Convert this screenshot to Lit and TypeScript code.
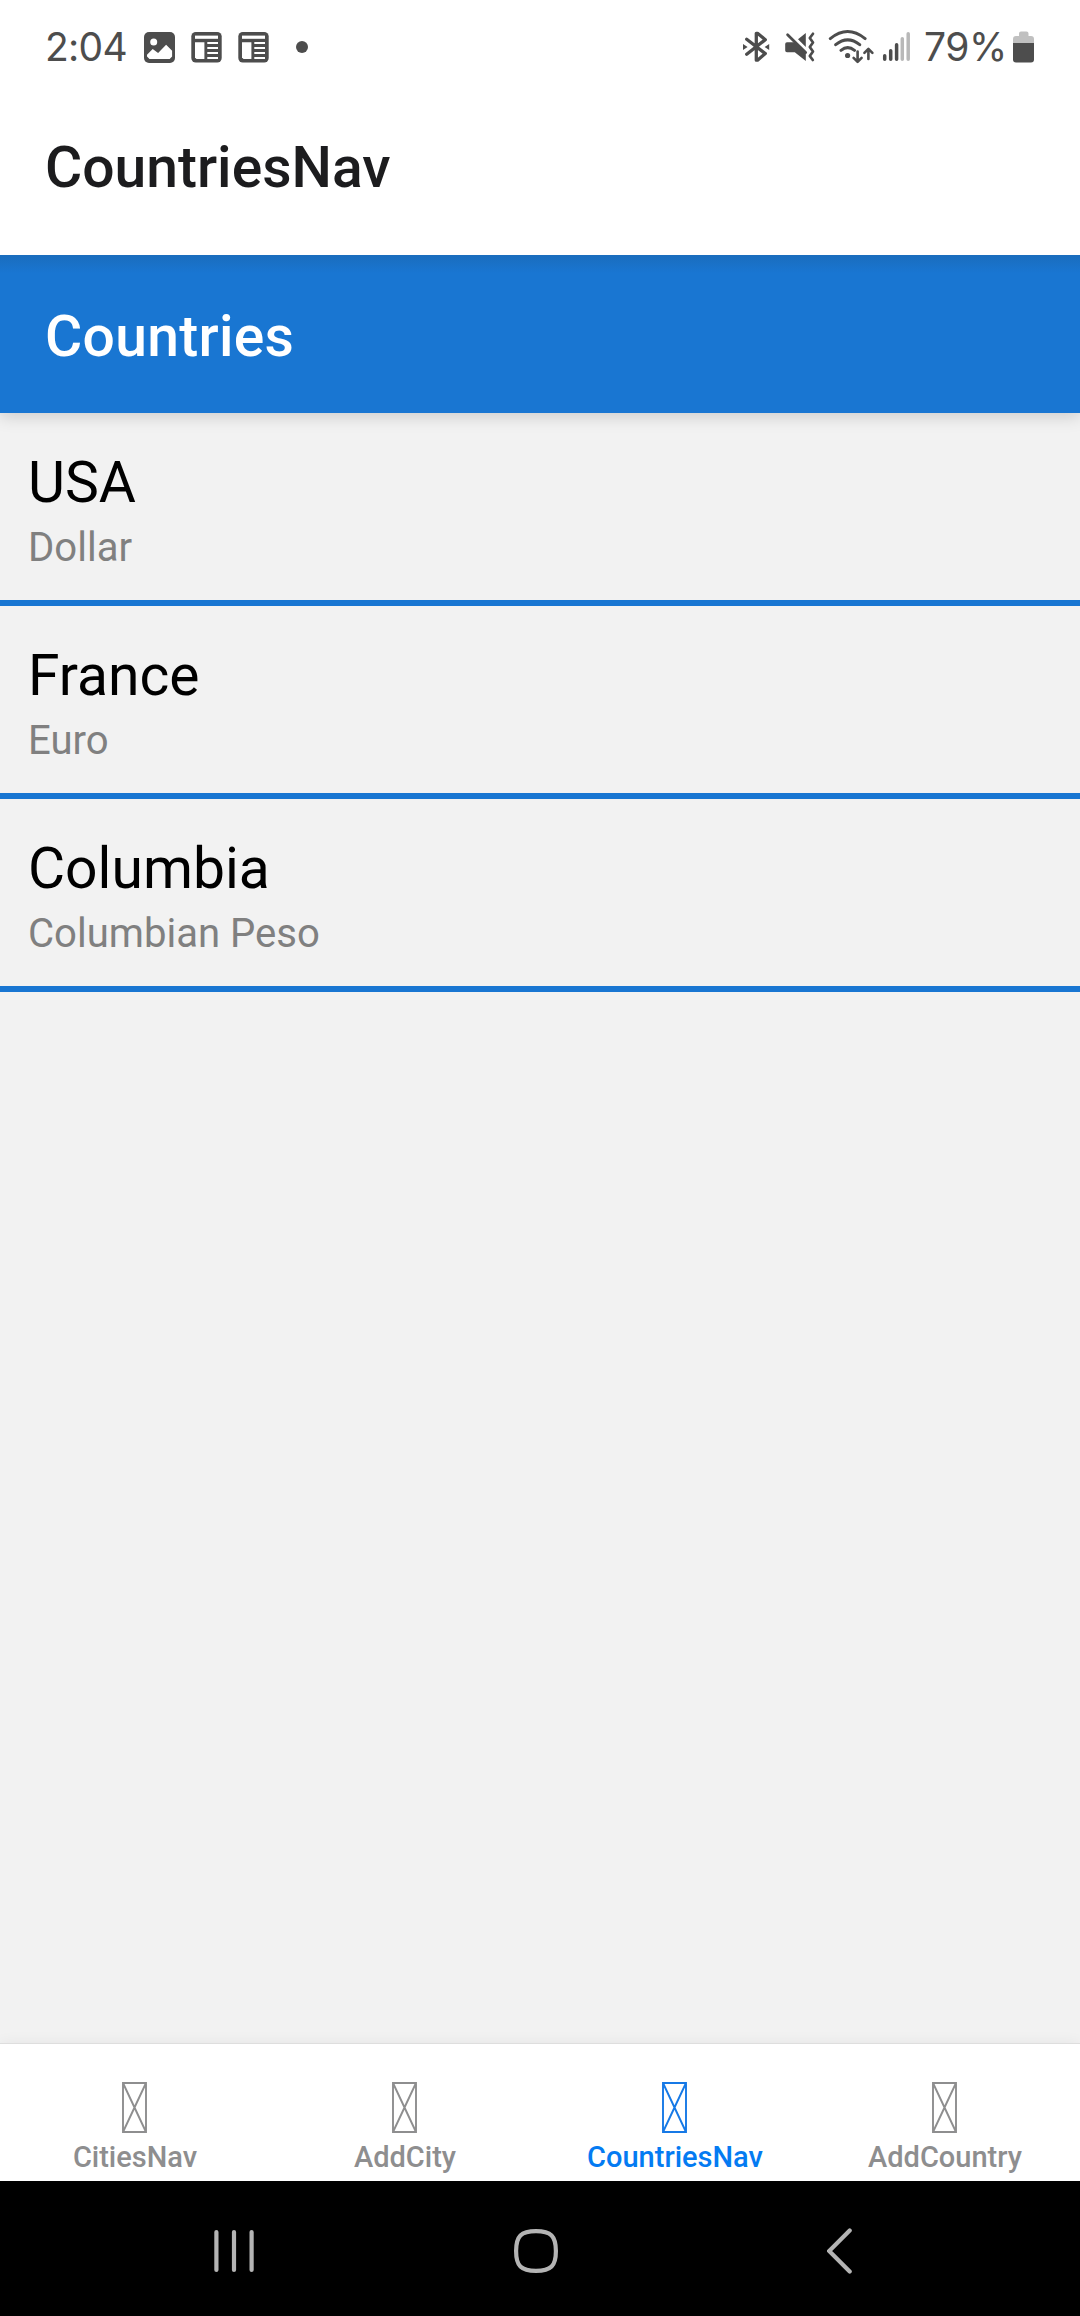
import { LitElement, html, css, svg } from "lit";
import { customElement, property } from "lit/decorators.js";
import { classMap } from "lit/directives/class-map.js";

const newsIcon = (dx: number) => svg`
  <g transform="translate(${dx} 0)">
    <rect x="191.3" y="32" width="30.4" height="30.6" rx="4.5" fill="#4d4d4d"/>
    <rect x="195" y="35.6" width="23" height="3.2" fill="#fff"/>
    <path d="M195 42.3h9.4V59H196.5l-1.5-1.5z" fill="#fff"/>
    <path d="M207.3 43h10.7M207.3 47.9h10.7M207.3 52.9h10.7M207.3 58h10.7" stroke="#fff" stroke-width="2"/>
  </g>`;

@customElement("status-bar")
export class StatusBar extends LitElement {
  static styles = css`
    :host {
      display: flex;
      height: 94px;
      box-sizing: border-box;
      padding: 24px 44px 0 45px;
      background: #fff;
      color: #4d4d4d;
      font: 400 39px/45px Inter, Roboto, sans-serif;
    }
    svg { margin-top: 1px; }
    .time { width: 95px; letter-spacing: -0.7px; white-space: nowrap; }
    .left { width: 180px; height: 45px; }
    .right { width: 175px; height: 45px; margin-left: auto; }
    .level { width: 95px; padding-left: 9px; box-sizing: border-box; letter-spacing: -0.4px; white-space: nowrap; }
    .battery { width: 26px; height: 45px; }
  `;
  render() {
    return html`
      <span class="time">2:04</span>
      <svg class="left" viewBox="140 25 180 45">
        <rect x="144" y="32" width="31" height="31" rx="5" fill="#4d4d4d"/>
        <circle cx="153.7" cy="42" r="3.5" fill="#fff"/>
        <path d="M147 54.7l5.7-5.8 5.4 4 8-8.2 6 6v5.8l-2.4 2.4h-20.2l-2.5-2.4z" fill="#fff"/>
        ${newsIcon(0)}${newsIcon(47)}
        <circle cx="302" cy="47" r="6" fill="#4d4d4d"/>
      </svg>
      <svg class="right" viewBox="740 25 175 45">
        <g fill="none" stroke="#4d4d4d" stroke-width="3.3" stroke-linecap="round" stroke-linejoin="round">
          <path d="M746.7 39.3l18.6 14.3-7.8 6.6h-1.2V33.3h1.2l7.8 6.4-18.6 14.6"/>
        </g>
        <path d="M743 44l4.6 3-4.6 3zM769.2 44l-4.6 3 4.6 3z" fill="#4d4d4d"/>
        <path d="M787 42.3h8.3l10.5 10.2V61l-11-8.8H787q-1.8 0-1.8-1.8v-6.3q0-1.8 1.8-1.8zM805.8 33v14l-7.8-7.8z" fill="#4d4d4d"/>
        <path d="M787.6 34.8l18 17.6" stroke="#4d4d4d" stroke-width="2.8" stroke-linecap="round"/>
        <path d="M791 34.2l15 14.7" stroke="#fff" stroke-width="1.6"/>
        <g fill="none" stroke="#4d4d4d" stroke-linecap="round" stroke-linejoin="round" stroke-width="2.7">
          <path d="M813 33.8l-3.2 4.2 3.2 4.5-3.2 4.5 3.2 4.5-3.2 4.5 3 4"/>
          <path stroke-width="3" d="M830.3 38.6q17.3-14.2 34.8 0M835.7 44.7q12-9.7 24 0M841 50.4q6.7-5.6 13.5 0"/>
          <path stroke-width="2.6" d="M857.6 51.5v10M853.6 57.8l4 4 4-4M868.4 59V49M864.4 52.8l4-4 4 4"/>
          <path stroke-width="3.5" d="M884.7 55.7v3.5M890.7 50.7v8.5M896.6 44.7v14.5"/>
          <path stroke-width="3.5" stroke="#b8b8b8" d="M902.3 38.8v20.4M908.2 33.7v25.5"/>
        </g>
        <circle cx="847.6" cy="55.5" r="2.6" fill="#4d4d4d"/>
      </svg>
      <span class="level">79%</span>
      <svg class="battery" viewBox="1010 25 26 45">
        <path d="M1013 43v-4q0-3 3-3h3v-2.500q0-2 2-2h5.500q2 0 2 2V36h2.500q3 0 3 3v4z" fill="#c0c0c0"/>
        <path d="M1013 43h21v16.500q0 3-3 3h-15q-3 0-3-3z" fill="#4d4d4d"/>
      </svg>
    `;
  }
}

@customElement("country-row")
export class CountryRow extends LitElement {
  @property() name = "";
  @property() currency = "";
  static styles = css`
    :host {
      display: block;
      box-sizing: border-box;
      height: 193px;
      padding: 37px 28px 0;
      border-bottom: 6px solid #1976d2;
    }
    .name { font-size: 57px; line-height: 66px; color: #000; }
    .currency { margin-top: 9px; font-size: 40.1px; line-height: 46px; color: #808080; }
  `;
  render() {
    return html`
      <div class="name">${this.name}</div>
      <div class="currency">${this.currency}</div>
    `;
  }
}

@customElement("tab-bar")
export class TabBar extends LitElement {
  @property() active = "";
  static styles = css`
    :host {
      display: grid;
      grid-template-columns: repeat(4, 1fr);
      height: 138px;
      box-sizing: border-box;
      border-top: 1px solid #dedede;
      background: #fff;
      box-shadow: 0 0 14px rgba(0, 0, 0, 0.06);
    }
    .tab {
      display: flex;
      flex-direction: column;
      align-items: center;
      padding-top: 38px;
      color: #8e8e8f;
      font-size: 29px;
      font-weight: 500;
      line-height: 34px;
    }
    .on { color: #047bf2; }
    .on .glyph { color: #1679e6; }
    .glyph { width: 25px; height: 51px; margin: 0 1px 7px 0; }
  `;
  render() {
    return ["CitiesNav", "AddCity", "CountriesNav", "AddCountry"].map(
      (label) => html`
        <div class=${classMap({ tab: true, on: label === this.active })}>
          <svg class="glyph" viewBox="0 0 25 51">
            <path d="M1 1h23v49H1zL24 50M24 1L1 50" fill="none" stroke="currentColor" stroke-width="1.9"/>
          </svg>
          <span>${label}</span>
        </div>
      `
    );
  }
}

@customElement("app-root")
export class AppRoot extends LitElement {
  private countries = [
    { name: "USA", currency: "Dollar" },
    { name: "France", currency: "Euro" },
    { name: "Columbia", currency: "Columbian Peso" },
  ];
  static styles = css`
    :host {
      display: flex;
      flex-direction: column;
      width: 1080px;
      height: 2316px;
      overflow: hidden;
      background: #f2f2f2;
      font-family: Roboto, sans-serif;
    }
    .title {
      position: relative;
      height: 161px;
      box-sizing: border-box;
      padding: 41px 45px 0;
      background: #fff;
      color: #1c1c1e;
      font-size: 57px;
      font-weight: 500;
      line-height: 66px;
    }
    .header {
      height: 158px;
      box-sizing: border-box;
      padding: 49px 45px 0;
      background: linear-gradient(#1a6dbd, #1976d2 18px);
      color: #fff;
      font-size: 57px;
      font-weight: 500;
      line-height: 66px;
      letter-spacing: 0.3px;
      box-shadow: 0 3px 16px rgba(0, 0, 0, 0.17);
    }
    .list { flex: 1; }
    .keys {
      position: relative;
      display: flex;
      align-items: center;
      height: 135px;
      box-sizing: border-box;
      padding: 5px 0 0 214px;
      background: #000;
    }
    .keys svg { fill: none; stroke: #b4b4b4; stroke-width: 4.2; stroke-linecap: round; }
    .recents { width: 40px; height: 46px; margin-right: 260px; }
    .home { width: 44px; height: 46px; margin-right: 269px; }
    .back { width: 26px; height: 46px; }
  `;
  render() {
    return html`
      <status-bar></status-bar>
      <div class="title">CountriesNav</div>
      <div class="header">Countries</div>
      <div class="list">
        ${this.countries.map(
          (c) => html`<country-row .name=${c.name} .currency=${c.currency}></country-row>`
        )}
      </div>
      <tab-bar active="CountriesNav"></tab-bar>
      <div class="keys">
        <svg class="recents" viewBox="0 0 40 46"><path d="M2.400 4v38M20 4v38M37.600 4v38"/></svg>
        <svg class="home" viewBox="0 0 44 46">
          <path d="M22 3.100C37 3.100 41.900 8 41.900 23S37 42.900 22 42.900 2.100 38 2.100 23 7 3.100 22 3.100z"/>
        </svg>
        <svg class="back" viewBox="0 0 26 46"><path d="M22.700 2.500L2.200 23l20.500 20.500"/></svg>
      </div>
    `;
  }
}
